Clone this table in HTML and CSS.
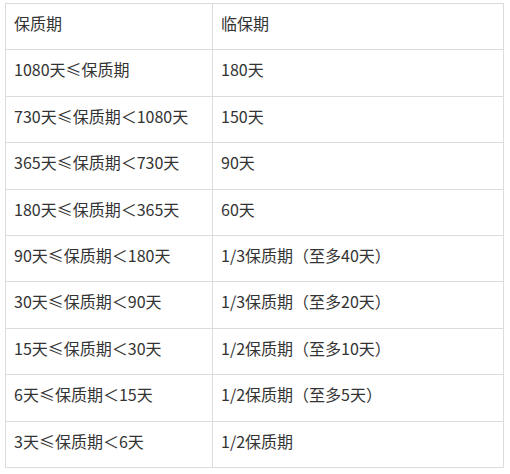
FILE: index.html
```html
<!DOCTYPE html>
<html lang="zh">
<head>
<meta charset="utf-8">
<link rel="stylesheet" href="styles.css">
</head>
<body>
<table class="shelf">
  <tr><td>保质期</td><td>临保期</td></tr>
  <tr><td>1080天≤保质期</td><td>180天</td></tr>
  <tr><td>730天≤保质期＜1080天</td><td>150天</td></tr>
  <tr><td>365天≤保质期＜730天</td><td>90天</td></tr>
  <tr><td>180天≤保质期＜365天</td><td>60天</td></tr>
  <tr><td>90天≤保质期＜180天</td><td>1/3保质期（至多40天）</td></tr>
  <tr><td>30天≤保质期＜90天</td><td>1/3保质期（至多20天）</td></tr>
  <tr><td>15天≤保质期＜30天</td><td>1/2保质期（至多10天）</td></tr>
  <tr><td>6天≤保质期＜15天</td><td>1/2保质期（至多5天）</td></tr>
  <tr><td>3天≤保质期＜6天</td><td>1/2保质期</td></tr>
</table>
</body>
</html>
```
FILE: styles.css
```css
html, body {
  margin: 0;
  padding: 0;
  background: #fff;
}
body {
  padding: 3px 0 0 5px;
  font-family: "Noto Sans CJK SC", sans-serif;
  font-size: 16px;
  color: #333;
}
.shelf {
  border-collapse: collapse;
  table-layout: fixed;
  width: 499px;
}
.shelf td {
  border: 1px solid #dcdcdc;
  height: 46.4px;
  padding: 7px 8px 0 8px;
  box-sizing: border-box;
  vertical-align: top;
  line-height: 24px;
  white-space: nowrap;
}
.shelf td:first-child {
  width: 207px;
}
```
